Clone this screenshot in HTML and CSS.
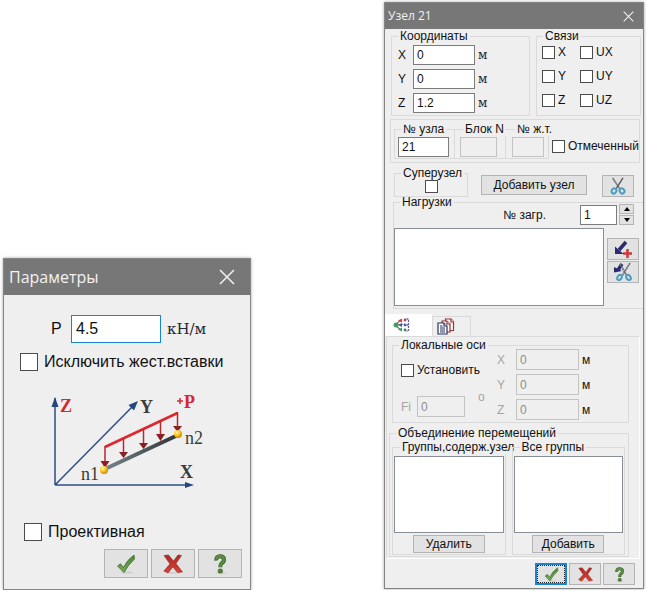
FILE: index.html
```html
<!DOCTYPE html>
<html lang="ru">
<head>
<meta charset="utf-8">
<title>Узел 21</title>
<link rel="stylesheet" href="styles.css">
</head>
<body>
<svg class="defs" aria-hidden="true">
  <defs>
    <linearGradient id="green" x1="0" y1="0" x2="0" y2="1"><stop offset="0" stop-color="#4b8a35"/><stop offset="1" stop-color="#79a957"/></linearGradient>
    <linearGradient id="red" x1="0" y1="0" x2="0" y2="1"><stop offset="0" stop-color="#a92b25"/><stop offset="1" stop-color="#d94236"/></linearGradient>
    <linearGradient id="beam" x1="0" y1="0" x2="1" y2="0"><stop offset="0" stop-color="#76858a"/><stop offset="1" stop-color="#303436"/></linearGradient>
    <radialGradient id="gold" cx=".35" cy=".3" r=".8"><stop offset="0" stop-color="#fff3a0"/><stop offset=".5" stop-color="#f8c21c"/><stop offset="1" stop-color="#b67808"/></radialGradient>
    <symbol id="check" viewBox="0 0 20 20"><ellipse cx="11" cy="18.5" rx="6" ry="1" fill="#cfcfcf"/><path d="M1.5 12 4.5 9.800 7.500 13.500 Q11 6 18 1 L18.500 5 Q12 11 8 18.500 Z" fill="url(#green)" stroke="#3c6b2a" stroke-width=".8"/></symbol>
    <symbol id="cross" viewBox="0 0 20 20"><ellipse cx="11" cy="18.800" rx="6" ry="1" fill="#cfcfcf"/><path d="M1 1.500 5.500 1 10.500 7 15 1 18.500 1.500 13 9.500 19.500 18 14.500 18.500 9.800 13 5 19 .8 17 7 10Z" fill="url(#red)" stroke="#94251f" stroke-width=".6"/></symbol>
    <symbol id="help" viewBox="0 0 20 20"><ellipse cx="11" cy="19" rx="5" ry="1" fill="#cfcfcf"/><path d="M6.300 6.500 Q6 2.300 10 2.300 Q14 2.300 14 5.800 Q14 8 11.500 9.500 Q10.300 10.500 10.300 13.300" fill="none" stroke="#365f27" stroke-width="4"/><path d="M6.300 5.800 Q6.500 2.300 10 2.300 Q14 2.300 14 5.800 Q14 8 11.500 9.500 Q10.300 10.500 10.300 12.800" fill="none" stroke="#5d9142" stroke-width="2.400"/><rect x="8.200" y="15" width="4.300" height="4" rx="1.500" fill="#4f8237" stroke="#365f27" stroke-width=".6"/></symbol>
    <symbol id="scissors" viewBox="0 0 18 20"><path d="M3 1 11 13" stroke="#85898c" stroke-width="2"/><path d="M14.500 1 7 13" stroke="#55595c" stroke-width="1.500"/><g fill="none" stroke="#479dbf" stroke-width="2.200"><ellipse cx="4.500" cy="15.500" rx="2.500" ry="3" transform="rotate(35 4.500 15.500)"/><ellipse cx="13.500" cy="15.500" rx="2.500" ry="3" transform="rotate(-35 13.500 15.500)"/></g></symbol>
    <symbol id="close" viewBox="0 0 16 16"><path d="M1 1 15 15M15 1 1 15" fill="none" stroke="#f2f2f2" stroke-width="1.500"/></symbol>
  </defs>
</svg>
<main class="desktop">
  <section class="dialog params" aria-labelledby="params-title">
    <header class="titlebar">
      <h1 id="params-title">Параметры</h1>
      <button class="close" type="button" aria-label="Закрыть"><svg><use href="#close"/></svg></button>
    </header>
    <form class="params-body">
      <div class="load-row">
        <label for="p">P</label>
        <input id="p" class="field focused" type="text" value="4.5">
        <span class="unit">кН/м</span>
      </div>
      <label class="tick exclude"><input type="checkbox">Исключить жест.вставки</label>
      <svg class="diagram" viewBox="0 0 160 100" role="img" aria-label="Схема распределённой нагрузки">
        <g stroke="#2e4f86" stroke-width="1.500" fill="none"><path d="M5 95V8M5 95 83 16M5 95H138"/></g>
        <g fill="#25467c"><path d="M5 7 8.500 17H1.500Z"/><path d="M88 11 84 20.500 78.500 15Z"/><path d="M144 95 135 92V98Z"/></g>
        <path d="M55 79 128 45" stroke="url(#beam)" stroke-width="4"/>
        <path d="M55 57 127.500 23" stroke="#df252d" stroke-width="2.500"/>
        <g stroke="#b92930" stroke-width="1.500"><path d="M55 56V73M73.500 48V64M93.500 39V55M110.500 31V46M127.500 22V37"/></g>
        <g fill="#8b2024"><path d="M50.500 71H59.500L55 78ZM69 62H78L73.500 68ZM89 53H98L93.500 59ZM106 44H115L110.500 51ZM123 36H132L127.500 42Z"/></g>
        <circle cx="54" cy="80" r="4" fill="url(#gold)"/><circle cx="128" cy="44" r="4" fill="url(#gold)"/>
        <g class="axis"><text x="10" y="22" fill="#d52830">Z</text><text x="90" y="23" fill="#3b3b3b">Y</text><text x="134" y="18" fill="#d52830">P</text><text x="130" y="88" fill="#3b3b3b">X</text></g>
        <path d="M127 11H133M130 8V14" stroke="#d52830" stroke-width="1.500"/>
        <g class="node"><text x="31" y="90">n1</text><text x="135" y="54">n2</text></g>
      </svg>
      <label class="tick projective"><input type="checkbox">Проективная</label>
      <footer class="actions">
        <button type="button" aria-label="Применить"><svg><use href="#check"/></svg></button>
        <button type="button" aria-label="Отмена"><svg><use href="#cross"/></svg></button>
        <button type="button" aria-label="Справка"><svg><use href="#help"/></svg></button>
      </footer>
    </form>
  </section>

  <section class="dialog node-dialog" aria-labelledby="node-title">
    <header class="titlebar">
      <h1 id="node-title">Узел 21</h1>
      <button class="close" type="button" aria-label="Закрыть"><svg><use href="#close"/></svg></button>
    </header>
    <form class="node-body">
      <div class="top-row">
        <fieldset class="coords">
          <legend>Координаты</legend>
          <div class="coord-grid">
            <label for="x">X</label><input id="x" class="field" type="text" value="0"><span class="unit">м</span>
            <label for="y">Y</label><input id="y" class="field" type="text" value="0"><span class="unit">м</span>
            <label for="z">Z</label><input id="z" class="field" type="text" value="1.2"><span class="unit">м</span>
          </div>
        </fieldset>
        <fieldset class="links">
          <legend>Связи</legend>
          <div class="link-grid">
            <label class="tick"><input type="checkbox">X</label><label class="tick"><input type="checkbox">UX</label>
            <label class="tick"><input type="checkbox">Y</label><label class="tick"><input type="checkbox">UY</label>
            <label class="tick"><input type="checkbox">Z</label><label class="tick"><input type="checkbox">UZ</label>
          </div>
        </fieldset>
      </div>

      <div class="ident-row">
        <fieldset class="ident-node"><legend>№ узла</legend><input class="field" type="text" value="21" aria-label="№ узла"></fieldset>
        <fieldset class="ident-block"><legend>Блок N</legend><input class="field" type="text" disabled aria-label="Блок N"></fieldset>
        <fieldset class="ident-rigid"><legend>№ ж.т.</legend><input class="field" type="text" disabled aria-label="№ ж.т."></fieldset>
        <label class="tick marked"><input type="checkbox">Отмеченный</label>
      </div>

      <div class="super-row">
        <fieldset class="super"><legend>Суперузел</legend><input type="checkbox" aria-label="Суперузел"></fieldset>
        <button class="add-node" type="button">Добавить узел</button>
        <button class="tool" type="button" aria-label="Вырезать"><svg><use href="#scissors"/></svg></button>
      </div>

      <fieldset class="loads">
        <legend>Нагрузки</legend>
        <div class="case-row">
          <label for="case">№ загр.</label>
          <input id="case" class="field" type="text" value="1">
          <div class="spin">
            <button type="button" aria-label="Больше"><svg viewBox="0 0 6 4"><path d="M0 4 3 0 6 4Z"/></svg></button>
            <button type="button" aria-label="Меньше"><svg viewBox="0 0 6 4"><path d="M0 0 3 4 6 0Z"/></svg></button>
          </div>
        </div>
        <div class="loads-row">
          <div class="list" role="listbox" aria-label="Нагрузки" tabindex="0"></div>
          <div class="load-tools">
            <button class="tool" type="button" aria-label="Добавить нагрузку"><svg viewBox="0 0 18 18"><path d="M12 2 5 10" stroke="#2d2a70" stroke-width="3.500"/><path d="M1 6.500V14H9.500Z" fill="#2d2a70"/><path d="M13.500 9V18M9 13.500H18" stroke="#cf383b" stroke-width="2.500"/></svg></button>
            <button class="tool" type="button" aria-label="Удалить нагрузку"><svg viewBox="0 0 18 18"><path d="M8 1 4 7" stroke="#2d2a70" stroke-width="3.500"/><path d="M0 4V9.500L8 8Z" fill="#2d2a70"/><path d="M6 1 13 13M16 0 8 13" stroke="#6d7276" stroke-width="1.800" stroke-dasharray="2 .5"/><g fill="none" stroke="#479dbf" stroke-width="2"><ellipse cx="5.500" cy="14.500" rx="2" ry="2.800" transform="rotate(35 5.500 14.500)"/><ellipse cx="14.500" cy="14.500" rx="2" ry="2.800" transform="rotate(-35 14.500 14.500)"/></g></svg></button>
          </div>
        </div>
      </fieldset>

      <div class="tabs" role="tablist">
        <button class="tab active" type="button" role="tab" aria-selected="true" aria-label="Оси и перемещения"><svg viewBox="0 0 18 16"><path d="M3 7 7 3M3 7H10M3 8 7 12" stroke="#777" stroke-width="1.200"/><circle cx="3" cy="7.500" r="2.500" fill="#4b9b5c"/><path d="M5 3 9 1V5Z" fill="#d93642"/><path d="M5 7.500 9 5.500V9.500Z" fill="#53549b"/><path d="M5 12 9 10V14Z" fill="#38a15d"/><circle cx="12" cy="2.500" r="1.400" fill="#c4384c"/><circle cx="12" cy="7.500" r="1.400" fill="#555da0"/><circle cx="12" cy="12.500" r="1.400" fill="#388b5d"/><path d="M13.500 1.500H15.500V13.500H13.500M13.500 7.500H16.500" fill="none" stroke="#58659b" stroke-width="1.300" stroke-dasharray="2 1"/></svg></button>
        <button class="tab" type="button" role="tab" aria-selected="false" aria-label="Документы"><svg viewBox="0 0 18 17"><g fill="#fff" stroke-width="1.200"><path d="M8.500 1H14L16.500 3.500V12.500H8.500Z" stroke="#9b2c35"/><path d="M14 1V4H17" stroke="#9b2c35"/><path d="M5 3H10L13 6V14H5Z" stroke="#9b2c35"/><path d="M10 3V6H13" stroke="#9b2c35"/><path d="M1 5H7L10 8V16H1Z" stroke="#27305f"/><path d="M7 5V8H10" stroke="#27305f"/></g><path d="M3 8H5.500M3 10H8M3 12H8M3 14H8" stroke="#27305f"/></svg></button>
      </div>

      <div class="panel" role="tabpanel">
        <fieldset class="local">
          <legend>Локальные оси</legend>
          <div class="local-grid">
            <div class="local-left">
              <label class="tick"><input type="checkbox">Установить</label>
              <div class="angle"><label for="fi">Fi</label><input id="fi" class="field" type="text" value="0" disabled><span>o</span></div>
            </div>
            <div class="axis-grid">
              <label for="lx">X</label><input id="lx" class="field" type="text" value="0" disabled><span>м</span>
              <label for="ly">Y</label><input id="ly" class="field" type="text" value="0" disabled><span>м</span>
              <label for="lz">Z</label><input id="lz" class="field" type="text" value="0" disabled><span>м</span>
            </div>
          </div>
        </fieldset>
        <fieldset class="merge">
          <legend>Объединение перемещений</legend>
          <div class="merge-grid">
            <fieldset>
              <legend>Группы,содерж.узел</legend>
              <div class="list" role="listbox" aria-label="Группы, содержащие узел" tabindex="0"></div>
              <button type="button">Удалить</button>
            </fieldset>
            <fieldset>
              <legend>Все группы</legend>
              <div class="list" role="listbox" aria-label="Все группы" tabindex="0"></div>
              <button type="button">Добавить</button>
            </fieldset>
          </div>
        </fieldset>
      </div>
      <footer class="actions">
        <button class="default" type="button" aria-label="Применить"><svg><use href="#check"/></svg></button>
        <button type="button" aria-label="Отмена"><svg><use href="#cross"/></svg></button>
        <button type="button" aria-label="Справка"><svg><use href="#help"/></svg></button>
      </footer>
    </form>
  </section>
</main>
</body>
</html>
```
FILE: styles.css
```css
* { box-sizing: border-box; }

body {
  margin: 0;
  background: #fff;
  color: #111;
  font: 12px/14px "Liberation Sans", Arial, sans-serif;
}

.defs { position: absolute; width: 0; height: 0; }
svg { display: block; }

.desktop {
  display: flex;
  justify-content: space-between;
  align-items: flex-end;
  padding: 2px 2px 0 3px;
}

.dialog {
  flex: none;
  background: #efefef;
  border: 1px solid #858585;
  box-shadow: 0 0 3px rgba(0, 0, 0, .35);
}

.titlebar {
  display: flex;
  justify-content: space-between;
  align-items: center;
  background: #777;
  color: #f2f2f2;
}

h1 {
  margin: 0;
  font-family: "Open Sans", "Noto Sans", sans-serif;
  font-weight: 400;
}

button {
  display: flex;
  justify-content: center;
  align-items: center;
  padding: 0;
  border: 1px solid #b4b4b4;
  border-radius: 0;
  background: #e2e2e2;
  color: #111;
  font: inherit;
}

.close { border: 0; background: none; }

.field {
  width: 100%;
  min-width: 0;
  height: 20px;
  margin: 0;
  padding: 0 3px;
  border: 1px solid #7c7c7c;
  border-radius: 0;
  background: #fff;
  color: #111;
  font: inherit;
}

.field:disabled {
  border-color: #c3c3c3;
  background: #efefef;
  color: #8c8c8c;
}

input[type="checkbox"] {
  appearance: none;
  flex: none;
  width: 13px;
  height: 13px;
  margin: 0;
  border: 1px solid #4b4b4b;
  background: #fff;
}

.tick { display: flex; align-items: center; gap: 3px; white-space: nowrap; }
.unit { font-family: "DejaVu Serif", serif; color: #1f2937; }

fieldset {
  min-width: 0;
  margin: 0;
  padding: 0;
  border: 1px solid #dadada;
}

legend { margin-left: 6px; padding: 0 2px; white-space: nowrap; }

.list { border: 1px solid #888e96; background: #fff; }

.actions { display: flex; justify-content: flex-end; }

/* Load parameters */
.params { width: 248px; font-size: 16px; line-height: 20px; }
.params .titlebar { height: 36px; padding: 0 15px 0 5px; }
.params h1 { font-size: 16px; }
.close svg { width: 16px; height: 16px; }
.params-body { padding: 20px 8px 11px; }

.load-row {
  display: grid;
  grid-template-columns: 14px 90px auto;
  align-items: center;
  column-gap: 6px;
  margin-left: 39px;
}

.load-row .field { height: 28px; }
.field.focused { border: 1px solid #1883d7; outline: 0; }
.params .field { padding: 0 4px; }
.params .unit { font-size: 15px; }
.params .tick { gap: 6px; }
.params input[type="checkbox"] { width: 18px; height: 18px; }
.exclude { margin: 9px 0 0 8px; }
.diagram { width: 160px; height: 100px; margin: 18px 0 0 38px; }
.axis { font: bold 18px "Liberation Serif", serif; }
.node { font: 18px "Liberation Serif", serif; fill: #3b3b3b; }
.projective { margin: 32px 0 0 12px; }
.params .actions { gap: 3px; margin-top: 7px; }
.params .actions button { width: 44px; height: 29px; }
.params .actions svg { width: 20px; height: 20px; }

/* Node properties */
.node-dialog { width: 260px; margin-bottom: 1px; }
.node-dialog .titlebar { height: 26px; padding: 0 9px 0 3px; }
.node-dialog h1 { font-size: 12px; }
.node-dialog .close svg { width: 11px; height: 11px; }

.top-row {
  display: grid;
  grid-template-columns: 139fr 105fr;
  gap: 6px;
  padding: 0 2px 0 6px;
}

.coord-grid {
  display: grid;
  grid-template-columns: 12px 62px 1fr;
  align-items: center;
  gap: 4px 3px;
  padding: 2px 6px;
}

.coord-grid .unit { font-size: 12px; }

.link-grid {
  display: grid;
  grid-template-columns: 38px 1fr;
  row-gap: 10px;
  padding: 2px 5px;
}

.ident-row {
  display: grid;
  grid-template-columns: 61px 51px 43px auto;
  align-items: start;
  margin: 3px 3px 0 5px;
  padding: 2px 3px 3px;
  border: 1px solid #dadada;
}

.ident-row fieldset { padding: 1px 5px 1px 3px; }
.ident-row .ident-block { padding: 1px 8px 1px 5px; }
.ident-row .ident-rigid { padding: 1px 4px 1px 6px; }
.ident-row fieldset + fieldset { border-left: 0; }
.ident-row legend { margin-left: 3px; }
.marked { align-self: end; height: 20px; margin: 0 0 3px 3px; }

.super-row {
  display: flex;
  align-items: flex-end;
  margin: 3px 9px 0;
}

.super { width: 74px; height: 31px; }
.super input { display: block; margin: 0 auto; }
.add-node { width: 106px; height: 20px; margin: 0 0 2px 13px; }
.tool { width: 32px; height: 22px; }
.tool svg { width: 18px; height: 18px; }
.super-row .tool { margin-left: auto; }

.loads { margin: -2px 0 0 8px; border-right: 0; }

.case-row {
  display: flex;
  justify-content: flex-end;
  align-items: center;
  margin-top: -5px;
  padding-right: 9px;
}

.case-row label { margin-right: 34px; }
.case-row .field { width: 37px; margin-right: 2px; }
.spin { display: grid; gap: 1px; }
.spin button { width: 15px; height: 10px; }
.spin svg { width: 6px; height: 4px; }

.loads-row {
  display: grid;
  grid-template-columns: 1fr 32px;
  gap: 3px;
  margin-top: 3px;
  padding: 0 4px 2px 0;
}

.loads-row .list { height: 78px; }
.load-tools { display: grid; align-content: start; gap: 1px; padding-top: 10px; }

.tabs { display: flex; align-items: flex-end; margin-top: 5px; }
.tab { justify-content: flex-start; width: 39px; height: 20px; padding-left: 4px; border-color: #dadada; border-bottom: 0; background: #efefef; }
.tab.active { width: 47px; height: 22px; padding-left: 7px; border-color: #fff; background: #fff; }
.tab svg { width: 18px; height: 17px; }

.panel {
  margin: 0 3px 0 1px;
  padding: 1px 10px 1px 2px;
  border: 1px solid #dadada;
  border-right-color: #fff;
  border-bottom-color: #fff;
}

.local { margin-left: 3px; }
.local-grid { display: grid; grid-template-columns: 1fr 131px; margin-top: -3px; }
.local-left { display: grid; align-content: start; gap: 19px; padding: 14px 0 0 8px; }
.angle { display: grid; grid-template-columns: 13px 48px auto; align-items: center; gap: 3px; color: #a5a5a5; }
.angle span { margin: -20px 0 0 10px; }
.axis-grid {
  display: grid;
  grid-template-columns: 16px 63px auto;
  align-items: center;
  gap: 4px 3px;
  padding-bottom: 2px;
}
.axis-grid label { color: #a5a5a5; }
.axis-grid .field, .angle .field { height: 21px; }

.merge { margin-top: 3px; }
.merge-grid {
  display: grid;
  grid-template-columns: 1fr 1fr;
  gap: 6px;
  padding: 0 3px 1px 2px;
}
.merge-grid fieldset { display: block; padding: 2px 1px 1px; }
.merge-grid .list { height: 77px; }
.merge-grid button { width: 72px; height: 18px; margin: 2px auto 0; }

.node-dialog .actions { gap: 2px; padding: 4px 8px 3px; }
.node-dialog .actions button { width: 32px; height: 22px; }
.node-dialog .actions svg { width: 15px; height: 15px; }
.node-dialog .actions .default { border: 2px solid #1883d7; outline: 1px dotted #222; outline-offset: -3px; }
```
